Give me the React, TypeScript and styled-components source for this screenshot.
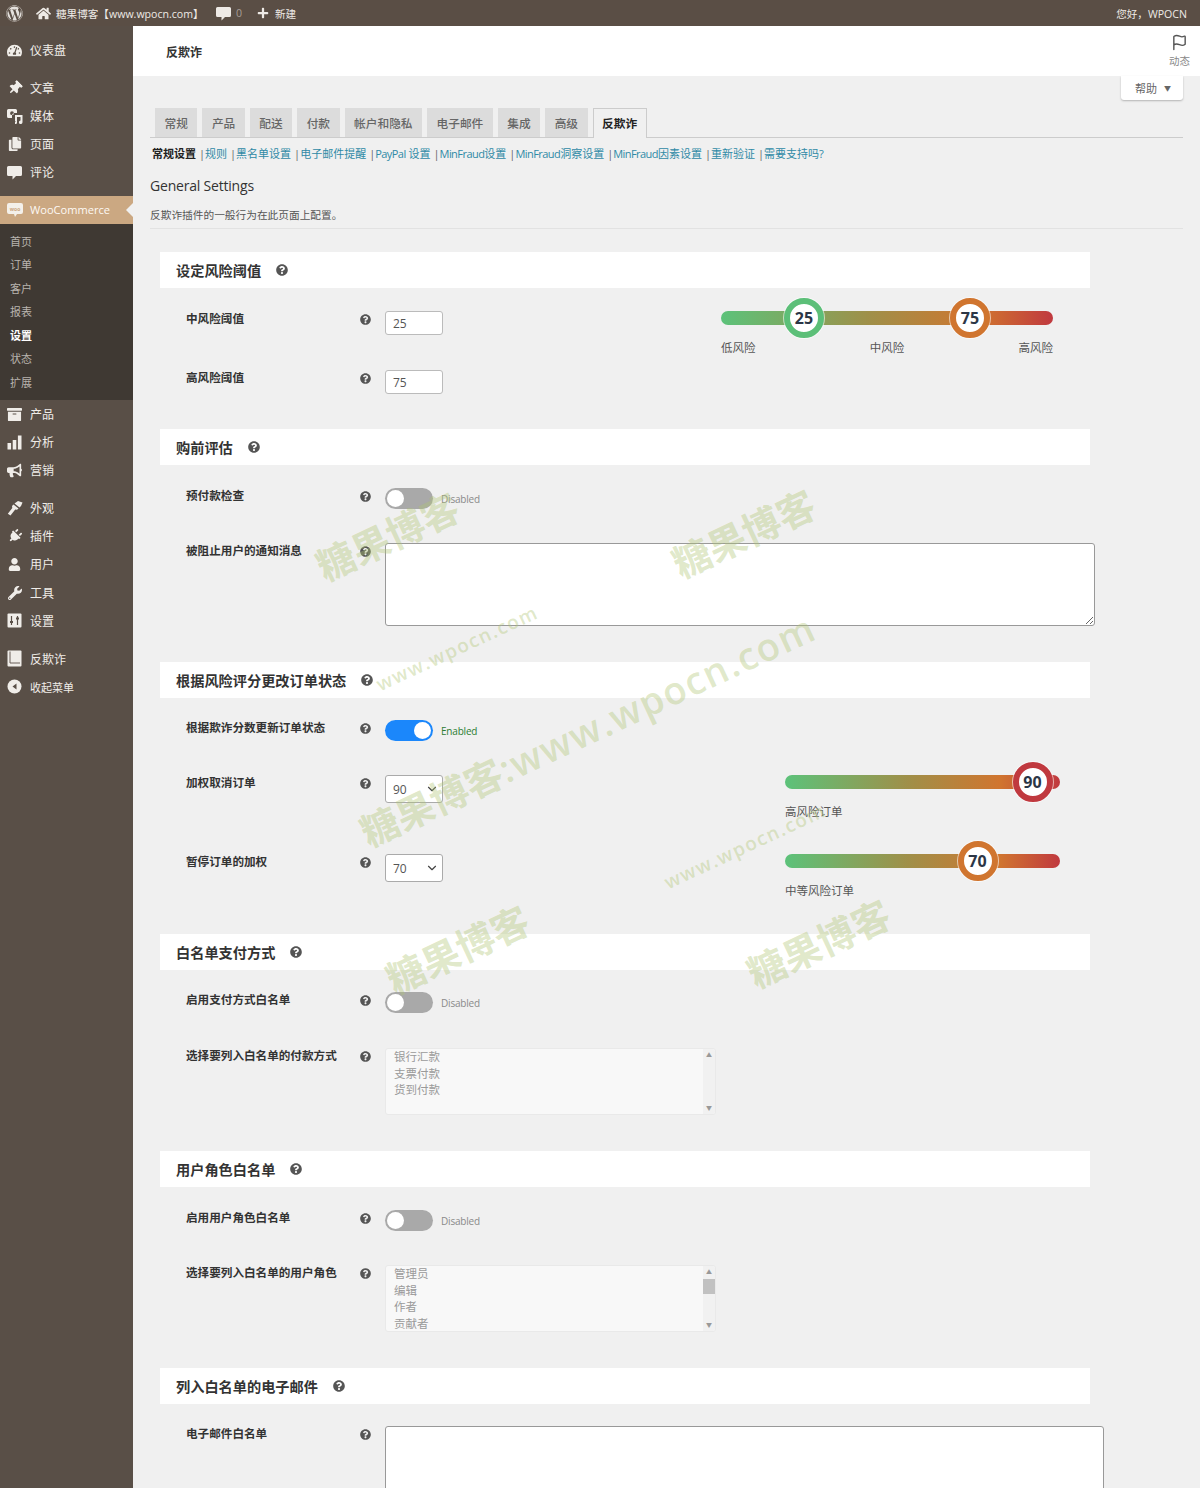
import React from 'react'
import styled, { createGlobalStyle } from 'styled-components'
import {
  FaArchive,
  FaBullhorn,
  FaCopy,
  FaHome,
  FaPlug,
  FaPlus,
  FaQuestionCircle,
  FaTachometerAlt,
  FaThumbtack,
  FaUser,
  FaWordpress,
  FaWrench
} from 'react-icons/fa'
import { ChevronDown, Flag } from 'lucide-react'

const FONT = `'Open Sans', 'Noto Sans CJK SC', sans-serif`
const SIDE_BG = '#594f47'

const GlobalStyle = createGlobalStyle`
  html, body {
    margin: 0;
    padding: 0;
    overflow: hidden;
    background: #f0f0f0;
    font-family: ${FONT};
  }
  * { box-sizing: border-box; }
`

const Tilted = styled.span`
  display: flex;
  transform: rotate(45deg);
`

const MediaIcon = () => (
  <svg width="16" height="16" viewBox="0 0 16 16" fill="currentColor">
    <path d="M1.5 1h7A1.5 1.5 0 0 1 10 2.5V5H7.5A2.5 2.5 0 0 0 5 7.5V10H1.5A1.5 1.5 0 0 1 0 8.5v-6A1.5 1.5 0 0 1 1.5 1zM5 3.3a1.9 1.9 0 1 0 0 3.8 1.9 1.9 0 0 0 0-3.8z" />
    <path d="M8 7h7.5v7.2a1.8 1.8 0 1 1-2-1.7V9H10v5.7A1.3 1.3 0 0 1 8.7 16H8v-2h.4v-1H8z" />
  </svg>
)

const BubbleIcon = () => (
  <svg width="15" height="15" viewBox="0 0 15 15" fill="currentColor">
    <path d="M1.5 1h12A1.5 1.5 0 0 1 15 2.5v7a1.5 1.5 0 0 1-1.5 1.5H9l-3.5 3.500V11h-4A1.5 1.5 0 0 1 0 9.5v-7A1.5 1.5 0 0 1 1.5 1z" />
  </svg>
)

const BarsIcon = () => (
  <svg width="15" height="15" viewBox="0 0 15 15" fill="currentColor">
    <rect x="0.5" y="8" width="3.6" height="6.5" />
    <rect x="5.7" y="5" width="3.6" height="9.5" />
    <rect x="10.9" y="0.5" width="3.6" height="14" />
  </svg>
)

const BrushIcon = () => (
  <svg width="16" height="16" viewBox="0 0 16 16" fill="currentColor">
    <path d="M7.5 3.5 11 1l4.5 1.5L14 6l-1.5 1.5-5-4z" />
    <path d="M6.5 4.5l5 4-1.5 1.3-1.8-.2L3.5 15.5 0.8 13.800 5.300 8 5 6z" />
  </svg>
)

const SlidersIcon = () => (
  <svg width="15" height="15" viewBox="0 0 15 15">
    <rect x="0.5" y="0.5" width="14" height="14" rx="1" fill="currentColor" />
    <path d="M4.5 3v9M10.5 3v9" stroke={SIDE_BG} strokeWidth="1.2" />
    <path d="M3 9h3M9 5.5h3" stroke={SIDE_BG} strokeWidth="1.8" />
  </svg>
)

const BookIcon = () => (
  <svg width="15" height="17" viewBox="0 0 15 17">
    <rect x="0.5" y="0.5" width="14" height="16" rx="1" fill="currentColor" />
    <path d="M3 1.5v11.5h10" stroke={SIDE_BG} strokeWidth="0.9" fill="none" />
  </svg>
)

const CollapseIcon = () => (
  <svg width="15" height="15" viewBox="0 0 15 15">
    <circle cx="7.5" cy="7.5" r="7" fill="currentColor" />
    <path d="M9.5 4.5v6l-4-3z" fill={SIDE_BG} />
  </svg>
)

const WooIcon = () => (
  <svg width="16" height="14" viewBox="0 0 16 14">
    <path d="M2 0h12a2 2 0 0 1 2 2v7a2 2 0 0 1-2 2h-4l-2 3-1-3H2a2 2 0 0 1-2-2V2a2 2 0 0 1 2-2z" fill="#f4f0ea" />
    <text x="8" y="7.5" textAnchor="middle" fontSize="5" fontWeight="700" fill="#cba882" fontFamily="Open Sans">
      woo
    </text>
  </svg>
)

const menuGroups = [
  [{ icon: <FaTachometerAlt size={15} />, label: '仪表盘' }],
  [
    { icon: <Tilted><FaThumbtack size={14} /></Tilted>, label: '文章' },
    { icon: <MediaIcon />, label: '媒体' },
    { icon: <FaCopy size={14} />, label: '页面' },
    { icon: <BubbleIcon />, label: '评论' }
  ]
]

const lowerGroups = [
  [
    { icon: <FaArchive size={15} />, label: '产品' },
    { icon: <BarsIcon />, label: '分析' },
    { icon: <FaBullhorn size={15} />, label: '营销' }
  ],
  [
    { icon: <BrushIcon />, label: '外观' },
    { icon: <Tilted><FaPlug size={14} /></Tilted>, label: '插件' },
    { icon: <FaUser size={13} />, label: '用户' },
    { icon: <FaWrench size={14} />, label: '工具' },
    { icon: <SlidersIcon />, label: '设置' }
  ],
  [
    { icon: <BookIcon />, label: '反欺诈' },
    { icon: <CollapseIcon />, label: '收起菜单', small: true }
  ]
]

const subItems = ['首页', '订单', '客户', '报表', '设置', '状态', '扩展']
const tabs = ['常规', '产品', '配送', '付款', '帐户和隐私', '电子邮件', '集成', '高级', '反欺诈']
const subLinks = [
  '规则',
  '黑名单设置',
  '电子邮件提醒',
  'PayPal 设置',
  'MinFraud设置',
  'MinFraud洞察设置',
  'MinFraud因素设置',
  '重新验证',
  '需要支持吗?'
]

const marks = [
  { x: 387, y: 535, size: 38, cjk: '糖果博客', latin: '' },
  { x: 743, y: 532, size: 38, cjk: '糖果博客', latin: '' },
  { x: 457, y: 648, size: 19, cjk: '', latin: 'www.wpocn.com' },
  { x: 587, y: 728, size: 38, cjk: '糖果博客', latin: ':www.wpocn.com' },
  { x: 745, y: 846, size: 19, cjk: '', latin: 'www.wpocn.com' },
  { x: 457, y: 948, size: 38, cjk: '糖果博客', latin: '' },
  { x: 818, y: 942, size: 38, cjk: '糖果博客', latin: '' }
]

const Help = () => (
  <HelpMark>
    <FaQuestionCircle size={11} />
  </HelpMark>
)

const Toggle: React.FC<{ on?: boolean }> = ({ on }) => (
  <ToggleWrap>
    <ToggleTrack $on={on}>
      <ToggleKnob $on={on} />
    </ToggleTrack>
    <ToggleText $on={on}>{on ? 'Enabled' : 'Disabled'}</ToggleText>
  </ToggleWrap>
)

const Knob: React.FC<{ value: number; color: string }> = ({ value, color }) => (
  <KnobCircle $color={color} style={{ left: `${value}%` }}>
    {value}
  </KnobCircle>
)

const ListBox: React.FC<{ items: string[]; thumb?: boolean }> = ({ items, thumb }) => (
  <ListFrame>
    <ListOptions>
      {items.map((item) => (
        <ListOption key={item}>{item}</ListOption>
      ))}
    </ListOptions>
    <ScrollTrack>
      <ScrollArrow>▲</ScrollArrow>
      {thumb && <ScrollThumb />}
      <ScrollArrow $bottom>▼</ScrollArrow>
    </ScrollTrack>
  </ListFrame>
)

const RiskSelect: React.FC<{ value: string }> = ({ value }) => (
  <SelectWrap>
    <SelectBox defaultValue={value}>
      <option>{value}</option>
    </SelectBox>
    <SelectChevron>
      <ChevronDown size={14} strokeWidth={2} />
    </SelectChevron>
  </SelectWrap>
)

const SideGroup: React.FC<{ items: { icon: React.ReactNode; label: string; small?: boolean }[] }> = ({ items }) => (
  <MenuGroup>
    {items.map((item) => (
      <MenuItem key={item.label}>
        <MenuIcon>{item.icon}</MenuIcon>
        <MenuLabel $small={item.small}>{item.label}</MenuLabel>
      </MenuItem>
    ))}
  </MenuGroup>
)

const SectionHeader: React.FC<{ title: string }> = ({ title }) => (
  <SectionHead>
    <SectionTitle>{title}</SectionTitle>
    <SectionHelp>
      <FaQuestionCircle size={12} />
    </SectionHelp>
  </SectionHead>
)

// the latin runs of the sub nav sit tighter than the chinese ones
const LinkText: React.FC<{ text: string }> = ({ text }) => (
  <SubLink>
    {text.split(/([A-Za-z]+)/).map((part, i) => (i % 2 ? <TightLatin key={i}>{part}</TightLatin> : part))}
  </SubLink>
)

export default function App() {
  return (
    <Page>
      <GlobalStyle />
      <AdminBar>
        <BarLeft>
          <WpLogo>
            <FaWordpress size={17} />
          </WpLogo>
          <BarItem $width={20}>
            <FaHome size={15} />
          </BarItem>
          <SiteName>糖果博客【www.wpocn.com】</SiteName>
          <CommentCount>
            <BubbleIcon />
            <span>0</span>
          </CommentCount>
          <NewItem>
            <FaPlus size={12} />
            <span>新建</span>
          </NewItem>
        </BarLeft>
        <Greeting>您好，WPOCN</Greeting>
      </AdminBar>
      <Body>
        <Sidebar>
          {menuGroups.map((items, i) => (
            <SideGroup key={i} items={items} />
          ))}
          <WooItem>
            <MenuIcon>
              <WooIcon />
            </MenuIcon>
            <WooLabel>WooCommerce</WooLabel>
          </WooItem>
          <SubMenu>
            {subItems.map((item) => (
              <SubItem key={item} $active={item === '设置'}>
                {item}
              </SubItem>
            ))}
          </SubMenu>
          {lowerGroups.map((items, i) => (
            <SideGroup key={i} items={items} />
          ))}
        </Sidebar>
        <Main>
          <PageHeader>
            <PageTitle>反欺诈</PageTitle>
            <Activity>
              <Flag size={17} strokeWidth={2} />
              <span>动态</span>
            </Activity>
          </PageHeader>
          <HelpRow>
            <HelpTab>
              帮助 <HelpCaret>▼</HelpCaret>
            </HelpTab>
          </HelpRow>
          <Wrap>
            <TabBar>
              {tabs.map((tab) => (
                <Tab key={tab} $active={tab === '反欺诈'}>
                  {tab}
                </Tab>
              ))}
            </TabBar>
            <SubNav>
              <strong>常规设置</strong>
              {subLinks.map((link) => (
                <React.Fragment key={link}>
                  <Pipe>|</Pipe>
                  <LinkText text={link} />
                </React.Fragment>
              ))}
            </SubNav>
            <Heading>General Settings</Heading>
            <Description>反欺诈插件的一般行为在此页面上配置。</Description>

            <Section>
              <SectionHeader title="设定风险阈值" />
              <SplitBody>
                <div>
                  <Row $top={23}>
                    <Label>中风险阈值</Label>
                    <Help />
                    <NumberInput defaultValue="25" />
                  </Row>
                  <Row $top={35}>
                    <Label>高风险阈值</Label>
                    <Help />
                    <NumberInput defaultValue="75" />
                  </Row>
                </div>
                <WideSlider>
                  <Track>
                    <Knob value={25} color="#5cbf78" />
                    <Knob value={75} color="#d0752f" />
                  </Track>
                  <TrackLabels>
                    <span>低风险</span>
                    <span>中风险</span>
                    <span>高风险</span>
                  </TrackLabels>
                </WideSlider>
              </SplitBody>
            </Section>

            <Section $top={35}>
              <SectionHeader title="购前评估" />
              <Row $top={23}>
                <Label>预付款检查</Label>
                <Help />
                <Toggle />
              </Row>
              <Row $top={34}>
                <Label>被阻止用户的通知消息</Label>
                <Help />
                <TextBox $width={710} $height={83} />
              </Row>
            </Section>

            <Section $top={36}>
              <SectionHeader title="根据风险评分更改订单状态" />
              <Row $top={22}>
                <Label>根据欺诈分数更新订单状态</Label>
                <Help />
                <Toggle on />
              </Row>
              <Row $top={34}>
                <Label>加权取消订单</Label>
                <Help />
                <RiskSelect value="90" />
                <NarrowSlider>
                  <Track>
                    <Knob value={90} color="#c0393f" />
                  </Track>
                  <NarrowLabel>高风险订单</NarrowLabel>
                </NarrowSlider>
              </Row>
              <Row $top={51}>
                <Label>暂停订单的加权</Label>
                <Help />
                <RiskSelect value="70" />
                <NarrowSlider>
                  <Track>
                    <Knob value={70} color="#d0752f" />
                  </Track>
                  <NarrowLabel>中等风险订单</NarrowLabel>
                </NarrowSlider>
              </Row>
            </Section>

            <Section $top={52}>
              <SectionHeader title="白名单支付方式" />
              <Row $top={22}>
                <Label>启用支付方式白名单</Label>
                <Help />
                <Toggle />
              </Row>
              <Row $top={35}>
                <Label>选择要列入白名单的付款方式</Label>
                <Help />
                <ListBox items={['银行汇款', '支票付款', '货到付款']} />
              </Row>
            </Section>

            <Section $top={36}>
              <SectionHeader title="用户角色白名单" />
              <Row $top={23}>
                <Label>启用用户角色白名单</Label>
                <Help />
                <Toggle />
              </Row>
              <Row $top={34}>
                <Label>选择要列入白名单的用户角色</Label>
                <Help />
                <ListBox items={['管理员', '编辑', '作者', '贡献者']} thumb />
              </Row>
            </Section>

            <Section $top={36}>
              <SectionHeader title="列入白名单的电子邮件" />
              <Row $top={22}>
                <Label>电子邮件白名单</Label>
                <Help />
                <TextBox $width={719} $height={100} />
              </Row>
            </Section>
          </Wrap>
        </Main>
      </Body>
      {marks.map((mark, i) => (
        <Watermark key={i} $x={mark.x} $y={mark.y} $size={mark.size}>
          {mark.cjk}
          <WatermarkLatin>{mark.latin}</WatermarkLatin>
        </Watermark>
      ))}
    </Page>
  )
}

const Page = styled.div`
  position: relative;
  width: 1200px;
  height: 1488px;
  overflow: hidden;
  background: #f0f0f0;
  color: #444;
`

const AdminBar = styled.div`
  display: flex;
  align-items: center;
  justify-content: space-between;
  height: 26px;
  padding: 0 13px 0 6px;
  background: #5a4e45;
  color: #eeeae6;
  font-size: 10.6px;
`

const BarLeft = styled.div`
  display: flex;
  align-items: center;
`

const WpLogo = styled.span`
  display: flex;
  width: 30px;
  color: #e4e0dc;
`

const BarItem = styled.span<{ $width: number }>`
  display: flex;
  width: ${(p) => p.$width}px;
`

const SiteName = styled.span`
  width: 160px;
  white-space: nowrap;
`

const CommentCount = styled.span`
  display: flex;
  align-items: center;
  gap: 5px;
  width: 41px;

  span {
    color: #a89f97;
  }
`

const NewItem = styled.span`
  display: flex;
  align-items: center;
  gap: 6px;
`

const Greeting = styled.span`
  white-space: nowrap;
`

const Body = styled.div`
  display: flex;
  height: 1462px;
`

const Sidebar = styled.nav`
  flex: 0 0 133px;
  padding-top: 10px;
  background: ${SIDE_BG};
  color: #f0ede9;
`

const MenuGroup = styled.div`
  margin-bottom: 9.5px;
`

const MenuItem = styled.div`
  display: flex;
  align-items: center;
  height: 28.2px;
`

const MenuIcon = styled.span`
  display: flex;
  justify-content: center;
  flex: 0 0 30px;
  padding-right: 1px;
`

const MenuLabel = styled.span<{ $small?: boolean }>`
  font-size: ${(p) => (p.$small ? 11 : 12)}px;
`

const WooItem = styled.div`
  position: relative;
  display: flex;
  align-items: center;
  height: 28px;
  background: #cba882;
  color: #fdf9f4;

  &::after {
    content: '';
    position: absolute;
    right: 0;
    top: 7px;
    border: 7px solid transparent;
    border-right-color: #f0f0f0;
    border-left-width: 0;
  }
`

const WooLabel = styled.span`
  font-size: 11.1px;
`

const SubMenu = styled.div`
  height: 176px;
  padding: 6px 0 0 10px;
  background: #3f3933;
`

const SubItem = styled.div<{ $active?: boolean }>`
  height: 23.45px;
  line-height: 23.45px;
  font-size: 11px;
  font-weight: ${(p) => (p.$active ? 700 : 400)};
  color: ${(p) => (p.$active ? '#fff' : '#b9b4ae')};
`

const Main = styled.main`
  flex: 1;
  min-width: 0;
`

const PageHeader = styled.header`
  display: flex;
  align-items: center;
  justify-content: space-between;
  height: 50px;
  padding: 0 10px 0 33px;
  background: #fff;
`

const PageTitle = styled.h1`
  margin: 2px 0 0;
  font-size: 12px;
  font-weight: 700;
  color: #333;
`

const Activity = styled.div`
  display: flex;
  flex-direction: column;
  align-items: center;
  gap: 2px;
  color: #555;
  font-size: 10.5px;

  span {
    color: #888;
  }
`

const HelpRow = styled.div`
  display: flex;
  justify-content: flex-end;
  height: 24px;
  padding-right: 17px;
`

const HelpTab = styled.div`
  display: flex;
  align-items: center;
  gap: 7px;
  width: 62px;
  height: 24px;
  padding-left: 14px;
  background: #fff;
  border-radius: 0 0 3px 3px;
  box-shadow: 0 1px 2px rgba(0, 0, 0, 0.25);
  font-size: 11px;
  color: #666;
`

const HelpCaret = styled.span`
  font-size: 7px;
`

const Wrap = styled.div`
  margin: 8px 17px 0;
`

const TabBar = styled.div`
  display: flex;
  gap: 5px;
  height: 30px;
  padding-left: 5px;
  border-bottom: 1px solid #ccc;
`

const Tab = styled.div<{ $active?: boolean }>`
  height: ${(p) => (p.$active ? 30 : 29)}px;
  padding: 0 8.5px;
  line-height: 28px;
  font-size: 11.7px;
  font-weight: ${(p) => (p.$active ? 700 : 500)};
  color: ${(p) => (p.$active ? '#222' : '#666')};
  background: ${(p) => (p.$active ? '#f0f0f0' : '#dcdcdc')};
  border: 1px solid ${(p) => (p.$active ? '#ccc' : '#dcdcdc')};
  border-bottom: ${(p) => (p.$active ? 'none' : '1px solid #dcdcdc')};
`

const SubNav = styled.div`
  display: flex;
  align-items: center;
  height: 16px;
  margin: 7px 0 0 2px;
  font-size: 11px;
  white-space: nowrap;
  color: #666;

  strong {
    color: #222;
  }
`

const Pipe = styled.span`
  margin: 0 0 0 3px;
  color: #666;
`

const SubLink = styled.span`
  color: #2f8aa6;
`

const TightLatin = styled.span`
  letter-spacing: -0.55px;
`

const Heading = styled.h2`
  margin: 15px 0 0;
  font-size: 14px;
  line-height: 20px;
  font-weight: 500;
  letter-spacing: -0.2px;
  color: #333;
`

const Description = styled.p`
  margin: 11px 0 0;
  padding-bottom: 5px;
  height: 22px;
  border-bottom: 1px solid #e2e2e2;
  font-size: 10.7px;
  line-height: 16px;
  color: #555;
`

const Section = styled.section<{ $top?: number }>`
  margin-top: ${(p) => p.$top ?? 23}px;
  margin-left: 10px;
`

const SectionHead = styled.div`
  display: flex;
  align-items: center;
  width: 930px;
  height: 36px;
  padding-left: 16px;
  background: #fff;
`

const SectionTitle = styled.h3`
  margin: 0;
  font-size: 14.2px;
  font-weight: 700;
  color: #333;
`

const SectionHelp = styled.span`
  display: flex;
  margin-left: 15px;
  color: #555;
`

const SplitBody = styled.div`
  display: flex;
`

const Row = styled.div<{ $top: number }>`
  display: flex;
  align-items: flex-start;
  margin-top: ${(p) => p.$top}px;
  padding-left: 26px;
`

const Label = styled.label`
  flex: 0 0 174px;
  font-size: 11.6px;
  line-height: 16px;
  font-weight: 700;
  color: #333;
  white-space: nowrap;
`

const HelpMark = styled.span`
  display: flex;
  flex: 0 0 25px;
  height: 16px;
  align-items: center;
  color: #555;
`

const NumberInput = styled.input`
  width: 58px;
  height: 24px;
  padding: 0 7px;
  background: #fff;
  border: 1px solid #bbb;
  border-radius: 3px;
  font: 12px ${FONT};
  color: #555;
`

const SelectWrap = styled.div`
  position: relative;
  flex: none;
  width: 58px;
  height: 28px;
`

const SelectBox = styled.select`
  width: 100%;
  height: 100%;
  padding: 0 7px;
  appearance: none;
  background: #fff;
  border: 1px solid #aaa;
  border-radius: 3px;
  font: 12px ${FONT};
  color: #555;
`

const SelectChevron = styled.span`
  position: absolute;
  top: 7px;
  right: 4px;
  display: flex;
  color: #444;
  pointer-events: none;
`

const TextBox = styled.textarea<{ $width: number; $height: number }>`
  flex: none;
  width: ${(p) => p.$width}px;
  height: ${(p) => p.$height}px;
  background: #fff;
  border: 1px solid #999;
  border-radius: 3px;
`

const ToggleWrap = styled.div`
  display: flex;
  align-items: center;
  gap: 8px;
`

const ToggleTrack = styled.div<{ $on?: boolean }>`
  position: relative;
  width: 48px;
  height: 21px;
  border-radius: 11px;
  background: ${(p) => (p.$on ? '#1b87fb' : '#a9a9a9')};
`

const ToggleKnob = styled.span<{ $on?: boolean }>`
  position: absolute;
  top: 2px;
  left: ${(p) => (p.$on ? 29 : 2)}px;
  width: 17px;
  height: 17px;
  border-radius: 50%;
  background: #fff;
`

const ToggleText = styled.span<{ $on?: boolean }>`
  font-size: 10px;
  letter-spacing: -0.2px;
  color: ${(p) => (p.$on ? '#2d7d32' : '#8a8a8a')};
`

const WideSlider = styled.div`
  width: 332px;
  margin: 23px 0 0 278px;
`

const NarrowSlider = styled.div`
  flex: none;
  width: 275px;
  height: 28px;
  margin-left: 342px;
`

const Track = styled.div`
  position: relative;
  height: 14px;
  border-radius: 7px;
  background: linear-gradient(90deg, #5cc27a 0%, #a08f48 45%, #d0752f 78%, #c0393f 100%);
`

const KnobCircle = styled.span<{ $color: string }>`
  position: absolute;
  top: 50%;
  width: 40px;
  height: 40px;
  transform: translate(-50%, -50%);
  display: flex;
  align-items: center;
  justify-content: center;
  background: #fff;
  border: 6px solid ${(p) => p.$color};
  border-radius: 50%;
  box-shadow: 0 0 0 1px rgba(255, 255, 255, 0.6);
  font-size: 16px;
  font-weight: 700;
  color: #2c3646;
`

const TrackLabels = styled.div`
  display: flex;
  justify-content: space-between;
  margin-top: 15px;
  font-size: 11.5px;
  line-height: 16px;
  color: #555;
`

const NarrowLabel = styled.div`
  margin-top: 15px;
  font-size: 11.5px;
  line-height: 16px;
  color: #555;
`

const ListFrame = styled.div`
  display: flex;
  flex: none;
  width: 331px;
  height: 67px;
  background: #f8f8f8;
  border: 1px solid #e9e9e9;
  border-radius: 3px;
  overflow: hidden;
`

const ListOptions = styled.div`
  flex: 1;
  padding-left: 8px;
  overflow: hidden;
`

const ListOption = styled.div`
  height: 16.5px;
  line-height: 16.5px;
  font-size: 11.5px;
  color: #9a9a9a;
`

const ScrollTrack = styled.div`
  position: relative;
  flex: 0 0 12px;
  padding-top: 13px;
  background: #f1f1f1;
`

const ScrollArrow = styled.span<{ $bottom?: boolean }>`
  position: absolute;
  left: 0;
  right: 0;
  ${(p) => (p.$bottom ? 'bottom: 1px;' : 'top: 1px;')}
  text-align: center;
  font-size: 6px;
  line-height: 10px;
  color: #999;
`

const ScrollThumb = styled.div`
  height: 15px;
  background: #c1c1c1;
`

const Watermark = styled.span<{ $x: number; $y: number; $size: number }>`
  position: absolute;
  left: ${(p) => p.$x}px;
  top: ${(p) => p.$y}px;
  transform: translate(-50%, -50%) rotate(-25deg);
  font-size: ${(p) => p.$size}px;
  font-weight: 700;
  white-space: nowrap;
  color: rgba(176, 198, 118, 0.4);
  pointer-events: none;
`

const WatermarkLatin = styled.span`
  font-weight: 600;
  letter-spacing: 1.5px;
`
